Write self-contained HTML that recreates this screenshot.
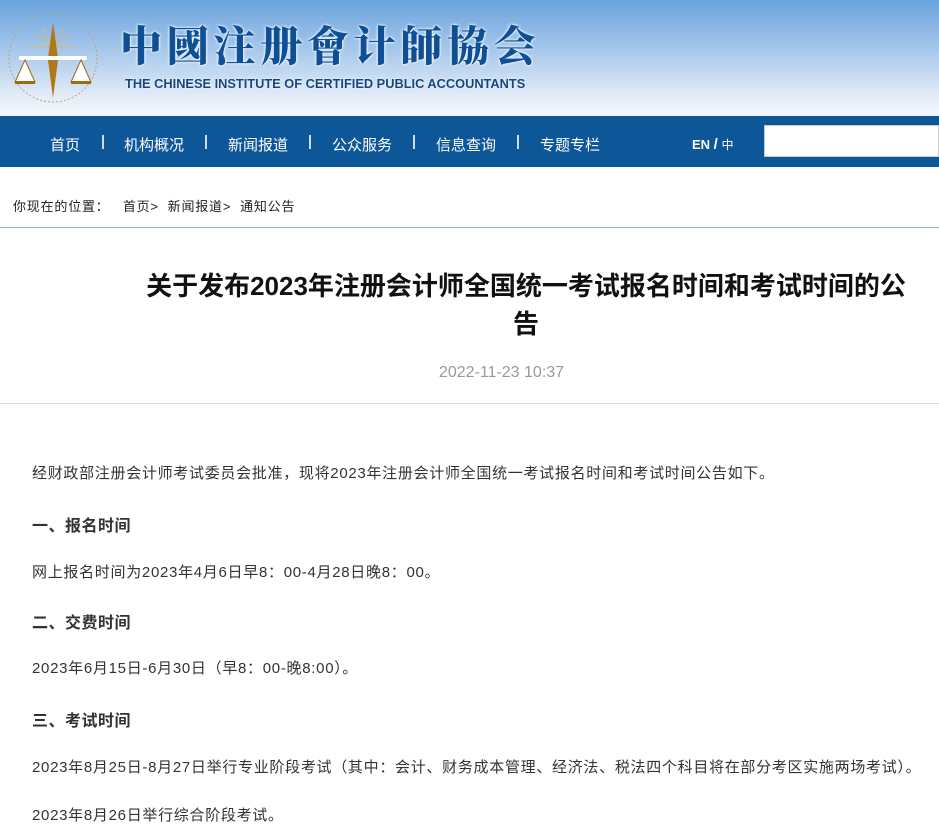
<!DOCTYPE html>
<html><head><meta charset="utf-8"><style>
*{margin:0;padding:0;box-sizing:border-box}
body{width:939px;height:831px;overflow:hidden;background:#fff;font-family:"Liberation Sans","Noto Sans CJK SC",sans-serif;color:#333}
.hd{position:absolute;left:0;top:0;width:939px;height:116px;background:linear-gradient(180deg,#6aa3dd 0%,#a9c9ec 45%,#e6eef8 85%,#f3f6fb 100%)}
.cn{position:absolute;left:120px;top:14px;font-family:"Noto Serif CJK SC",serif;font-weight:900;font-size:42px;letter-spacing:4.7px;color:#0f4f95;text-shadow:0 0 3px #fff,0 0 2px #fff}
.en{position:absolute;left:125px;top:76px;font-size:12.8px;font-weight:bold;color:#17457f;text-shadow:0 0 2px #fff}
.nav{position:absolute;left:0;top:116px;width:939px;height:51px;background:#0d5799}
.nav span{position:absolute;top:18px;color:#fff;font-size:15px}
.nav i{position:absolute;top:19px;width:2px;height:14px;background:#cfdcec}
.srch{position:absolute;left:764px;top:125px;width:175px;height:32px;background:#fff;border:1px solid #c9c9c9}
.bc{position:absolute;left:13px;top:196px;font-size:13px;color:#222;letter-spacing:0.8px}
.l1{position:absolute;left:0;top:227px;width:939px;height:1px;background:#8fb1d9}
h1{position:absolute;left:140px;top:267px;width:772px;font-size:26px;line-height:38px;font-weight:bold;color:#111;text-align:center}
.dt{position:absolute;left:0;top:364px;width:1003px;text-align:center;font-size:16px;color:#999}
.l2{position:absolute;left:0;top:403px;width:939px;height:1px;background:#ddd}
.p{position:absolute;left:32px;font-size:15px;letter-spacing:0.7px;color:#333;white-space:nowrap}
.b{font-size:16px;font-weight:bold;color:#333;letter-spacing:0.5px}
</style></head><body>
<div class="hd">
<svg style="position:absolute;left:5px;top:8px" width="100" height="100" viewBox="0 0 100 100">
<circle cx="48" cy="50" r="44" fill="none" stroke="#b8a48a" stroke-width="1" stroke-dasharray="2 2"/>
<g stroke="#d8b878" stroke-width="1">
<line x1="48" y1="40" x2="30" y2="25"/><line x1="48" y1="40" x2="66" y2="25"/><line x1="48" y1="40" x2="25" y2="38"/><line x1="48" y1="40" x2="71" y2="38"/><line x1="48" y1="40" x2="38" y2="20"/><line x1="48" y1="40" x2="58" y2="20"/></g>
<polygon points="48,14 43,50 53,50" fill="#b07818"/>
<rect x="14" y="48" width="68" height="4" fill="#fff"/>
<polygon points="48,52 43,52 48,90 53,52" fill="#b07818"/>
<polygon points="20,52 10,74 30,74" fill="#fff" stroke="#a06c10" stroke-width="1"/>
<polygon points="76,52 66,74 86,74" fill="#fff" stroke="#a06c10" stroke-width="1"/>
<rect x="10" y="73" width="20" height="3" fill="#a06c10"/><rect x="66" y="73" width="20" height="3" fill="#a06c10"/>
</svg>
<div class="cn">中國注册會计師協会</div>
<div class="en">THE CHINESE INSTITUTE OF CERTIFIED PUBLIC ACCOUNTANTS</div>
</div>
<div class="nav">
<span style="left:50px">首页</span><i style="left:102px"></i>
<span style="left:124px">机构概况</span><i style="left:205px"></i>
<span style="left:228px">新闻报道</span><i style="left:309px"></i>
<span style="left:332px">公众服务</span><i style="left:413px"></i>
<span style="left:436px">信息查询</span><i style="left:517px"></i>
<span style="left:540px">专题专栏</span>
<span style="left:692px;top:20px;font-size:13px;font-weight:bold">EN <b style="font-size:15px">/</b> <span style="position:static;font-size:12px;font-weight:normal">中</span></span>
</div>
<div class="srch"></div>
<div class="bc">你现在的位置：&nbsp;&nbsp;&nbsp;首页&gt;&nbsp;&nbsp;新闻报道&gt;&nbsp;&nbsp;通知公告</div>
<div class="l1"></div>
<h1>关于发布2023年注册会计师全国统一考试报名时间和考试时间的公告</h1>
<div class="dt">2022-11-23 10:37</div>
<div class="l2"></div>
<div class="p" style="top:462px">经财政部注册会计师考试委员会批准，现将2023年注册会计师全国统一考试报名时间和考试时间公告如下。</div>
<div class="p b" style="top:512px">一、报名时间</div>
<div class="p" style="top:561px">网上报名时间为2023年4月6日早8：00-4月28日晚8：00。</div>
<div class="p b" style="top:609px">二、交费时间</div>
<div class="p" style="top:657px">2023年6月15日-6月30日（早8：00-晚8:00）。</div>
<div class="p b" style="top:707px">三、考试时间</div>
<div class="p" style="top:756px">2023年8月25日-8月27日举行专业阶段考试（其中：会计、财务成本管理、经济法、税法四个科目将在部分考区实施两场考试）。</div>
<div class="p" style="top:804px">2023年8月26日举行综合阶段考试。</div>
</body></html>
